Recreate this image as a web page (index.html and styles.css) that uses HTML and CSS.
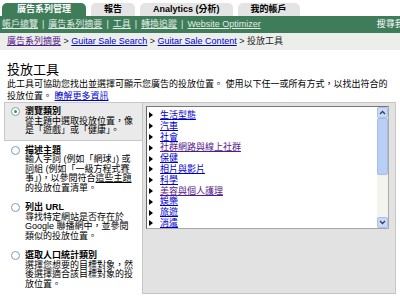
FILE: index.html
```html
<!DOCTYPE html>
<html>
<head>
  <meta charset="UTF-8">
  <title>投放工具</title>
  <link rel="stylesheet" href="styles.css">
</head>
<body>

  <div class="tabs">
    <div class="tab active">廣告系列管理</div>
    <div class="tab">報告</div>
    <div class="tab">Analytics (分析)</div>
    <div class="tab">我的帳戶</div>
  </div>

  <div class="subnav">
    <div class="subnav-links">
      <a href="#">帳戶總覽</a><span class="sep">|</span><a href="#">廣告系列摘要</a><span class="sep">|</span><a href="#">工具</a><span class="sep">|</span><a href="#">轉換追蹤</a><span class="sep">|</span><a href="#">Website Optimizer</a>
    </div>
    <div class="search">搜尋我的帳戶</div>
  </div>

  <div class="crumbs">
    <a href="#" class="visited">廣告系列摘要</a> &gt; <a href="#">Guitar Sale Search</a> &gt; <a href="#">Guitar Sale Content</a> &gt; 投放工具
  </div>

  <h1>投放工具</h1>
  <p class="intro">此工具可協助您找出並選擇可顯示您廣告的投放位置。 使用以下任一或所有方式，以找出符合的投放位置。 <a href="#" class="more">瞭解更多資訊</a></p>

  <div class="picker">
    <ul class="methods">
      <li class="method selected">
        <span class="radio"></span>
        <div class="method-text">
          <div class="method-title">瀏覽類別</div>
          從主題中選取投放位置，像是「遊戲」或「健康」。
        </div>
      </li>
      <li class="method">
        <span class="radio"></span>
        <div class="method-text">
          <div class="method-title">描述主題</div>
          輸入字詞 (例如「網球」) 或詞組 (例如「一級方程式賽事」)，以參閱符合<span class="ul">這些主題</span>的投放位置清單。
        </div>
      </li>
      <li class="method">
        <span class="radio"></span>
        <div class="method-text">
          <div class="method-title">列出 URL</div>
          尋找特定網站是否存在於Google 聯播網中，並參閱類似的投放位置。
        </div>
      </li>
      <li class="method">
        <span class="radio"></span>
        <div class="method-text">
          <div class="method-title">選取人口統計類別</div>
          選擇您想要的目標對象，然後選擇適合該目標對象的投放位置。
        </div>
      </li>
    </ul>

    <div class="panel">
      <div class="list">
        <ul class="items">
          <li><a href="#">生活型態</a></li>
          <li><a href="#">汽車</a></li>
          <li><a href="#">社會</a></li>
          <li><a href="#" class="visited">社群網路與線上社群</a></li>
          <li><a href="#">保健</a></li>
          <li><a href="#">相片與影片</a></li>
          <li><a href="#">科學</a></li>
          <li><a href="#" class="visited">美容與個人護理</a></li>
          <li><a href="#">娛樂</a></li>
          <li><a href="#">旅遊</a></li>
          <li><a href="#">消遣</a></li>
        </ul>
        <div class="scrollbar">
          <div class="sb-btn">
            <svg width="7" height="5" viewBox="0 0 7 5"><path d="M1 4 L3.5 1.5 L6 4" fill="none" stroke="#2c3e66" stroke-width="1.3"/></svg>
          </div>
          <div class="sb-thumb"></div>
          <div class="sb-track"></div>
          <div class="sb-btn">
            <svg width="7" height="5" viewBox="0 0 7 5"><path d="M1 1 L3.5 3.5 L6 1" fill="none" stroke="#2c3e66" stroke-width="1.3"/></svg>
          </div>
        </div>
      </div>
    </div>
  </div>

</body>
</html>
```

FILE: styles.css
```css
* {
  box-sizing: border-box;
  margin: 0;
  padding: 0;
}

body {
  font-family: "Liberation Sans", "Noto Sans CJK TC", sans-serif;
  font-size: 9px;
  color: #000;
  background-color: #fff;
  overflow: hidden;
}

a {
  color: #0000cc;
  text-decoration: underline;
}

a.visited {
  color: #551a8b;
}

/* top tabs */
.tabs {
  display: flex;
  gap: 5px;
  height: 16px;
  padding: 3px 0 0 2px;
}

.tab {
  height: 13px;
  line-height: 13px;
  padding: 0 13px;
  font-weight: bold;
  background-color: #e4e4e4;
  border-radius: 5px 5px 0 0;
}

.tab.active {
  padding: 0 15px;
  color: #fff;
  background-color: #3e7c5a;
}

.subnav {
  display: flex;
  height: 17px;
  line-height: 17px;
  padding-left: 2px;
  background-color: #3e7c5a;
  color: #e4eee7;
  white-space: nowrap;
  overflow: hidden;
}

.subnav a {
  color: #e4eee7;
}

.subnav .sep {
  margin: 0 4px;
}

.search {
  margin-left: 116px;
  color: #fff;
}

.crumbs {
  height: 17px;
  line-height: 17px;
  padding-left: 7px;
  background-color: #eceeec;
  color: #222;
}

h1 {
  margin: 12px 0 0 7px;
  font-size: 13px;
  font-weight: normal;
  line-height: 16px;
}

.intro {
  padding: 0 10px 0 7px;
  line-height: 12px;
}

.intro .more {
  display: inline-block;
  line-height: 12px;
}

/* method list + category panel */
.picker {
  display: flex;
  padding: 0 4px;
}

.methods {
  list-style: none;
  width: 138px;
}

.method {
  display: flex;
  gap: 5px;
  padding: 4px 0 4px 6px;
  border: 1px solid transparent;
  border-right: none;
  line-height: 9.5px;
}

.method.selected {
  background-color: #eaeaea;
  border-color: #c8c8c8;
}

.radio {
  flex-shrink: 0;
  display: flex;
  align-items: center;
  justify-content: center;
  width: 9px;
  height: 9px;
  border: 1px solid #7b9ebd;
  border-radius: 50%;
  background-color: #fff;
}

.method.selected .radio::after {
  content: "";
  width: 3px;
  height: 3px;
  border-radius: 50%;
  background-color: #35a035;
}

.method-text {
  width: 112px;
}

.method-title {
  font-weight: bold;
}

.method-text .ul {
  display: inline-block;
  line-height: 9.5px;
  text-decoration: underline;
}

.panel {
  width: 254px;
  height: 192px;
  padding: 3px 6px 0 3px;
  background-color: #e2e2e2;
  border: 1px solid #c6c6c6;
}

.list {
  display: flex;
  height: 123px;
  background-color: #fff;
  border: 1px solid #a8a8a8;
  border-left-color: #666;
  border-top-color: #777;
}

.items {
  flex: 1;
  list-style: none;
  padding: 3px 0 0 2px;
  line-height: 10.8px;
}

.items li {
  display: flex;
  align-items: center;
  gap: 7px;
}

.items li::before {
  content: "";
  border-left: 4px solid #000;
  border-top: 3px solid transparent;
  border-bottom: 3px solid transparent;
}

.scrollbar {
  display: flex;
  flex-direction: column;
  width: 11px;
  background-color: #f4f4ee;
}

.sb-btn {
  display: flex;
  align-items: center;
  justify-content: center;
  height: 11px;
  background-color: #c9d9f6;
  border: 1px solid #aac0e8;
  border-radius: 2px;
}

.sb-thumb {
  height: 57px;
  background-color: #b9cef5;
  border: 1px solid #a6bde9;
  border-radius: 2px;
}

.sb-track {
  flex: 1;
}
```
